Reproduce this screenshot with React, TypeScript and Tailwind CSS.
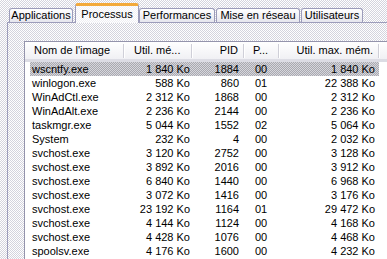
const rows = [
  ["wscntfy.exe", "1 840 Ko", "1884", "00", "1 840 Ko"],
  ["winlogon.exe", "588 Ko", "860", "01", "22 388 Ko"],
  ["WinAdCtl.exe", "2 312 Ko", "1868", "00", "2 312 Ko"],
  ["WinAdAlt.exe", "2 236 Ko", "2144", "00", "2 236 Ko"],
  ["taskmgr.exe", "5 044 Ko", "1552", "02", "5 064 Ko"],
  ["System", "232 Ko", "4", "00", "2 032 Ko"],
  ["svchost.exe", "3 120 Ko", "2752", "00", "3 128 Ko"],
  ["svchost.exe", "3 892 Ko", "2016", "00", "3 912 Ko"],
  ["svchost.exe", "6 840 Ko", "1440", "00", "6 968 Ko"],
  ["svchost.exe", "3 072 Ko", "1416", "00", "3 176 Ko"],
  ["svchost.exe", "23 192 Ko", "1164", "01", "29 472 Ko"],
  ["svchost.exe", "4 144 Ko", "1124", "00", "4 168 Ko"],
  ["svchost.exe", "4 428 Ko", "1076", "00", "4 468 Ko"],
  ["spoolsv.exe", "4 176 Ko", "1600", "00", "4 232 Ko"],
]

const checker = "bg-[conic-gradient(#d4d4de_25%,#ffffff_0_50%,#d4d4de_0_75%,#ffffff_0)] bg-[length:2px_2px]"
const tabBase = "h-[14px] border-t border-l border-r border-[#9c9cba] rounded-t-[3px] bg-[linear-gradient(#ffffff,#e6e6ee)] flex items-center justify-center leading-none"

function Divider() {
  return <span className="w-[2px] h-[14px] shrink-0 border-l border-[#cfcfd8] border-r border-r-white"></span>
}

export default function App() {
  return (
    <div className={`w-[387px] h-[259px] overflow-hidden pt-[3px] text-[11px] text-black font-['Liberation_Sans',sans-serif] ${checker}`}>
      {/* Tabs */}
      <div className="flex items-end h-[19px] pl-[9px]">
        <div className={`${tabBase} w-[64px]`}>Applications</div>
        <div className="relative z-10 ml-[2px] w-[64px] h-[20px] -mb-px border-l border-r border-[#9c9cba] border-t-[3px] border-t-[#f2a93b] rounded-t-[3px] bg-[conic-gradient(#f0f0f5_25%,#ffffff_0_50%,#f0f0f5_0_75%,#ffffff_0)] bg-[length:2px_2px] flex items-start justify-center pt-[3px] leading-none">
          Processus
        </div>
        <div className={`${tabBase} w-[76px]`}>Performances</div>
        <div className={`${tabBase} w-[84px] ml-px`}>Mise en réseau</div>
        <div className={`${tabBase} w-[62px] ml-px`}>Utilisateurs</div>
      </div>

      {/* Tab page */}
      <div className={`ml-[7px] h-[240px] border-l border-t border-[#9c9cba] pl-[16px] pt-[18px] ${checker}`}>
        <div className="h-full border-l border-t border-[#9494ac] bg-white">
          {/* Header */}
          <div className="flex h-[20px] border-b-[3px] border-[#dcdce4] bg-[linear-gradient(#ffffff,#f0f0f4)] items-center">
            <div className="w-[100px] flex items-center">
              <span className="flex-1 pl-[9px]">Nom de l'image</span>
              <Divider />
            </div>
            <div className="w-[68px] flex items-center">
              <span className="flex-1 pl-[9px]">Util. mé...</span>
              <Divider />
            </div>
            <div className="w-[52px] flex items-center">
              <span className="flex-1 text-right pr-[5px]">PID</span>
              <Divider />
            </div>
            <div className="w-[35px] flex items-center">
              <span className="flex-1 pl-[8px]">P...</span>
              <Divider />
            </div>
            <div className="w-[100px] flex items-center">
              <span className="flex-1 text-right pr-[5px]">Util. max. mém.</span>
              <Divider />
            </div>
          </div>

          {/* Rows */}
          <div className="pl-[5px]">
            {rows.map((r, i) => (
              <div
                key={i}
                className={`flex w-[349px] h-[14px] items-center leading-[14px] whitespace-nowrap ${i === 0 ? "bg-[conic-gradient(#a9a9b0_25%,#d6d6dc_0_50%,#a9a9b0_0_75%,#d6d6dc_0)] bg-[length:2px_2px]" : ""}`}
              >
                <span className="w-[95px] pl-[2px]">{r[0]}</span>
                <span className="w-[68px] text-right pr-[3px]">{r[1]}</span>
                <span className="w-[52px] text-right pr-[6px]">{r[2]}</span>
                <span className="w-[35px] pl-[10px]">{r[3]}</span>
                <span className="w-[99px] text-right pr-[4px]">{r[4]}</span>
              </div>
            ))}
          </div>
        </div>
      </div>
    </div>
  )
}
